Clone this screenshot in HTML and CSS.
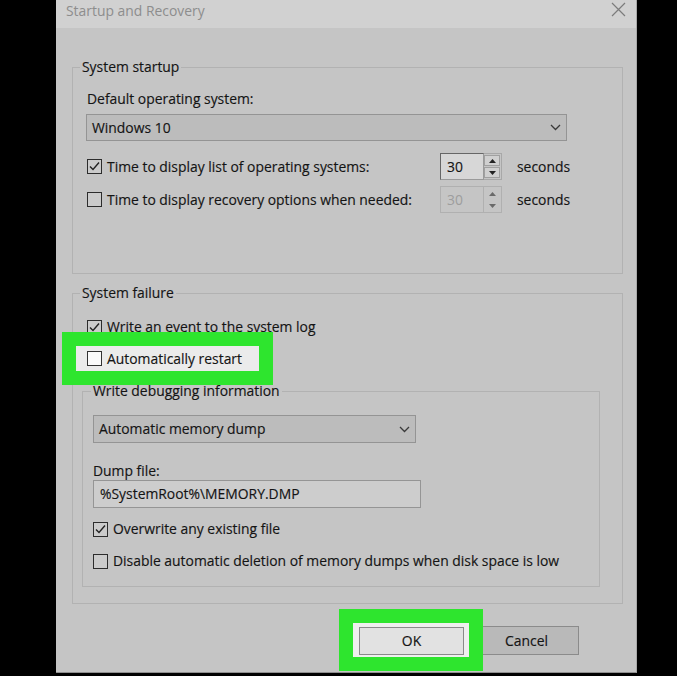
FILE: index.html
```html
<!DOCTYPE html>
<html lang="en">
<head>
<meta charset="utf-8">
<title>Startup and Recovery</title>
<link rel="stylesheet" href="styles.css">
</head>
<body>
<div class="screen">
  <div class="dialog">
    <div class="titlebar">
      <span class="title">Startup and Recovery</span>
      <svg class="close" width="15" height="15" viewBox="0 0 15 15"><path d="M1 1L14 14M14 1L1 14" stroke="#7c7c7c" stroke-width="1.2" fill="none"/></svg>
    </div>
    <div class="content">
      <fieldset class="group g1">
        <legend>System startup</legend>
        <div class="label">Default operating system:</div>
        <div class="select s1">
          <span>Windows 10</span>
          <svg width="11" height="7" viewBox="0 0 11 7"><polyline points="1,1 5.5,5.5 10,1" fill="none" stroke="#3a3a3a" stroke-width="1.3"/></svg>
        </div>
        <div class="row spinrow r1">
          <span class="cb"><svg width="13" height="13" viewBox="0 0 13 13"><polyline points="2,6.5 5,9.5 11,2.5" fill="none" stroke="#222" stroke-width="1.4"/></svg></span>
          <span class="rlabel">Time to display list of operating systems:</span>
          <div class="spin">
            <span class="val">30</span>
            <span class="arrows">
              <span class="arr"><svg width="7" height="4" viewBox="0 0 7 4"><polygon points="0,4 3.5,0 7,4" fill="#222"/></svg></span>
              <span class="arr"><svg width="7" height="4" viewBox="0 0 7 4"><polygon points="0,0 3.5,4 7,0" fill="#222"/></svg></span>
            </span>
          </div>
          <span class="unit">seconds</span>
        </div>
        <div class="row spinrow r2">
          <span class="cb"></span>
          <span class="rlabel">Time to display recovery options when needed:</span>
          <div class="spin disabled">
            <span class="val">30</span>
            <span class="arrows">
              <span class="arr"><svg width="7" height="4" viewBox="0 0 7 4"><polygon points="0,4 3.5,0 7,4" fill="#6a6a6a"/></svg></span>
              <span class="arr"><svg width="7" height="4" viewBox="0 0 7 4"><polygon points="0,0 3.5,4 7,0" fill="#6a6a6a"/></svg></span>
            </span>
          </div>
          <span class="unit">seconds</span>
        </div>
      </fieldset>

      <fieldset class="group g2">
        <legend>System failure</legend>
        <div class="row plain">
          <span class="cb"><svg width="13" height="13" viewBox="0 0 13 13"><polyline points="2,6.5 5,9.5 11,2.5" fill="none" stroke="#222" stroke-width="1.4"/></svg></span>
          <span>Write an event to the system log</span>
        </div>
        <div class="row hl">
          <span class="cb light"></span>
          <span>Automatically restart</span>
        </div>
        <fieldset class="group g3">
          <legend>Write debugging information</legend>
          <div class="select s2">
            <span>Automatic memory dump</span>
            <svg width="11" height="7" viewBox="0 0 11 7"><polyline points="1,1 5.5,5.5 10,1" fill="none" stroke="#3a3a3a" stroke-width="1.3"/></svg>
          </div>
          <div class="label label2">Dump file:</div>
          <div class="field">%SystemRoot%\MEMORY.DMP</div>
          <div class="row c3 first">
            <span class="cb"><svg width="13" height="13" viewBox="0 0 13 13"><polyline points="2,6.5 5,9.5 11,2.5" fill="none" stroke="#222" stroke-width="1.4"/></svg></span>
            <span>Overwrite any existing file</span>
          </div>
          <div class="row c3 second">
            <span class="cb"></span>
            <span>Disable automatic deletion of memory dumps when disk space is low</span>
          </div>
        </fieldset>
      </fieldset>

      <div class="buttons">
        <div class="okwrap"><div class="btn ok">OK</div></div>
        <div class="btn cancel">Cancel</div>
      </div>
    </div>
  </div>
</div>
</body>
</html>
```

FILE: styles.css
```css
html, body {
  margin: 0;
  padding: 0;
  background: #000;
}

body {
  font-family: "Open Sans", "Noto Sans", sans-serif;
  font-size: 13.9px;
  line-height: 20px;
  color: #141414;
  -webkit-text-stroke: 0.15px #141414;
}

.screen {
  display: flex;
  width: 677px;
  height: 676px;
  overflow: hidden;
}

.dialog {
  box-sizing: border-box;
  margin-left: 56px;
  width: 581px;
  height: 673px;
  background: #c5c5c5;
  border-right: 1px solid #a8a8a8;
  border-bottom: 1px solid #8f8f8f;
  overflow: hidden;
}

.titlebar {
  box-sizing: border-box;
  height: 28px;
  background: #d1d1d1;
  display: flex;
  justify-content: space-between;
  align-items: flex-start;
  padding: 0 10px 0 10px;
}

.title {
  line-height: 22px;
  color: #8d8d8d;
  -webkit-text-stroke: 0;
}

.close {
  margin-top: 2px;
}

.content {
  padding-left: 16px;
}

.group {
  box-sizing: border-box;
  min-width: 0;
  margin: 0;
  border: 1px solid #b2b2b2;
}

.group legend {
  padding: 0 2px;
  line-height: 20px;
}

.g1 {
  width: 551px;
  margin-top: 29px;
  padding: 12px 0 60px 13px;
}

.g1 legend {
  margin-left: -6px;
}

.label {
  margin-left: 1px;
  line-height: 20px;
}

.select {
  box-sizing: border-box;
  display: flex;
  align-items: center;
  justify-content: space-between;
  padding: 0 5px 0 5px;
  background: #bcbcbc;
  border: 1px solid #949494;
}

.s1 {
  width: 481px;
  height: 27px;
  margin-top: 5px;
}

.row {
  display: flex;
  align-items: center;
}

.spinrow {
  height: 27px;
  margin-left: 1px;
}

.r1 {
  margin-top: 12px;
}

.r2 {
  margin-top: 6px;
}

.cb {
  box-sizing: border-box;
  flex: none;
  width: 15px;
  height: 15px;
  margin-right: 5px;
  border: 1px solid #2c2c2c;
  background: #cbcbcb;
  display: flex;
  align-items: center;
  justify-content: center;
}

.cb.light {
  background: #fafafa;
  border-color: #333;
}

.spinrow .rlabel {
  width: 333px;
}

.spin {
  display: flex;
  width: 62px;
  height: 27px;
}

.spin .val {
  box-sizing: border-box;
  width: 44px;
  height: 27px;
  padding-left: 6px;
  line-height: 25px;
  border: 1px solid #666;
  border-right-color: #9a9a9a;
  border-bottom-color: #9a9a9a;
  background: #d7d7d7;
}

.arrows {
  box-sizing: border-box;
  width: 18px;
  height: 27px;
  display: flex;
  flex-direction: column;
  justify-content: center;
  gap: 1px;
  border: 1px solid #a8a8a8;
  border-left: none;
  padding: 1px 1px 1px 0;
}

.arr {
  box-sizing: border-box;
  flex: 1;
  display: flex;
  align-items: center;
  justify-content: center;
  border: 1px solid #a0a0a0;
  background: #d0d0d0;
}

.spin.disabled .val {
  background: transparent;
  color: #9d9d9d;
  -webkit-text-stroke: 0;
  border-color: #b0b0b0;
}

.spin.disabled .arrows {
  border-color: #b0b0b0;
}

.spin.disabled .arr {
  border-color: transparent;
  background: transparent;
}

.unit {
  margin-left: 15px;
}

.g2 {
  width: 551px;
  margin-top: 9px;
  padding: 13px 0 16px 9px;
}

.g2 > legend {
  margin-left: -2px;
}

.plain {
  height: 20px;
  margin-left: 5px;
  padding-top: 1px;
}

.hl {
  position: relative;
  z-index: 1;
  box-sizing: border-box;
  width: 183px;
  height: 25px;
  margin-top: 9px;
  margin-left: -6px;
  padding-left: 11px;
  background: #ebebeb;
  outline: 14px solid #2ee52e;
}

.g3 {
  width: 518px;
  margin-top: 10px;
  padding: 14px 0 15px 10px;
}

.g3 > legend {
  margin-left: -2px;
}

.s2 {
  width: 323px;
  height: 28px;
}

.label2 {
  margin-left: 0;
  margin-top: 19px;
  line-height: 18px;
}

.field {
  box-sizing: border-box;
  width: 328px;
  height: 28px;
  padding-left: 6px;
  line-height: 26px;
  background: #cdcdcd;
  border: 1px solid #959595;
}

.c3 {
  height: 20px;
}

.c3.first {
  margin-top: 11px;
}

.c3.second {
  margin-top: 12px;
}

.buttons {
  display: flex;
  justify-content: flex-end;
  align-items: flex-start;
  padding-right: 57px;
  margin-top: 19px;
}

.okwrap {
  position: relative;
  z-index: 1;
  padding: 4px 5px 2px 6px;
  background: #efefef;
  outline: 14px solid #2ee52e;
}

.btn {
  box-sizing: border-box;
  width: 105px;
  height: 28px;
  display: flex;
  align-items: center;
  justify-content: center;
  border: 1px solid #8a8a8a;
}

.ok {
  background: #e2e2e2;
}

.cancel {
  height: 29px;
  margin-left: 5px;
  margin-top: 3px;
  background: #b9b9b9;
  border-color: #8b8b8b;
}
```
